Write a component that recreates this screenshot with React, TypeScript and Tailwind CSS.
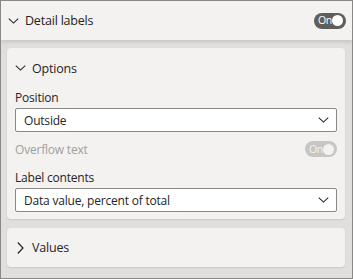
const font = "font-['Open_Sans','Noto_Sans',sans-serif]";

function ChevronDown({ className }: { className?: string }) {
  return (
    <svg viewBox="0 0 12 7" className={className} fill="none" stroke="currentColor" strokeWidth="1.2">
      <path d="M0.5 0.8 L6 6 L11.5 0.8" />
    </svg>
  );
}

function ChevronRight({ className }: { className?: string }) {
  return (
    <svg viewBox="0 0 7 12" className={className} fill="none" stroke="currentColor" strokeWidth="1.2">
      <path d="M0.8 0.5 L6 6 L0.8 11.5" />
    </svg>
  );
}

function Toggle({ disabled }: { disabled?: boolean }) {
  return (
    <div
      className={`flex h-[16px] w-[32px] items-center justify-between rounded-full pl-[4px] pr-[3px] ${
        disabled ? "bg-[#c8c6c4]" : "bg-[#605e5c]"
      }`}
    >
      <span className={`text-[10.5px] leading-none tracking-[-0.3px] ${disabled ? "text-[#f3f2f1]" : "text-white"}`}>On</span>
      <span className={`h-[11px] w-[11px] rounded-full ${disabled ? "bg-[#f3f2f1]" : "bg-white"}`} />
    </div>
  );
}

function Dropdown({ value }: { value: string }) {
  return (
    <div className="flex h-[24px] items-center justify-between rounded-[2px] border border-[#8a8886] bg-white pl-[8px] pr-[7px]">
      <span className="pt-[1px] text-[12px] tracking-[-0.2px] text-[#252423]">{value}</span>
      <ChevronDown className="h-[6px] w-[11px] text-[#252423]" />
    </div>
  );
}

export default function App() {
  return (
    <div className={`h-[279px] w-[353px] overflow-hidden border border-[#8a8886] bg-[#e1dfdd] ${font}`}>
      {/* Header */}
      <div className="relative flex h-[39px] items-center justify-between bg-[#f3f2f1] pl-[7px] pr-[6px] shadow-[0_2px_4px_rgba(0,0,0,0.12)]">
        <div className="flex items-center gap-[6px]">
          <ChevronDown className="h-[6px] w-[11px] text-[#252423]" />
          <span className="pt-[2px] text-[12.5px] tracking-[-0.2px] text-[#252423]">Detail labels</span>
        </div>
        <Toggle />
      </div>

      <div className="flex flex-col gap-[9px] pb-[10px] pl-[6px] pr-[7px] pt-[8px]">
        {/* Options card */}
        <div className="rounded-[4px] bg-[#f3f2f1] px-[8px] pb-[7px] shadow-[0_1px_2px_rgba(0,0,0,0.1)]">
          <div className="flex h-[40px] items-center gap-[6px]">
            <ChevronDown className="h-[6px] w-[11px] text-[#252423]" />
            <span className="pt-[2px] text-[12.5px] tracking-[-0.2px] text-[#252423]">Options</span>
          </div>
          <div className="h-[18px] pt-[1px] text-[12px] leading-[18px] tracking-[-0.2px] text-[#252423]">Position</div>
          <div className="mt-[2px]">
            <Dropdown value="Outside" />
          </div>
          <div className="flex h-[34px] items-center justify-between">
            <span className="pt-[1px] text-[12px] tracking-[-0.2px] text-[#a19f9d]">Overflow text</span>
            <Toggle disabled />
          </div>
          <div className="h-[22px] pt-[1px] text-[12px] leading-[22px] tracking-[-0.2px] text-[#252423]">Label contents</div>
          <Dropdown value="Data value, percent of total" />
        </div>

        {/* Values card */}
        <div className="flex h-[39px] items-center gap-[8px] rounded-[4px] bg-[#f3f2f1] px-[10px] shadow-[0_1px_2px_rgba(0,0,0,0.1)]">
          <ChevronRight className="h-[12px] w-[7px] text-[#252423]" />
          <span className="pt-[2px] text-[12.5px] tracking-[-0.2px] text-[#252423]">Values</span>
        </div>
      </div>
    </div>
  );
}
